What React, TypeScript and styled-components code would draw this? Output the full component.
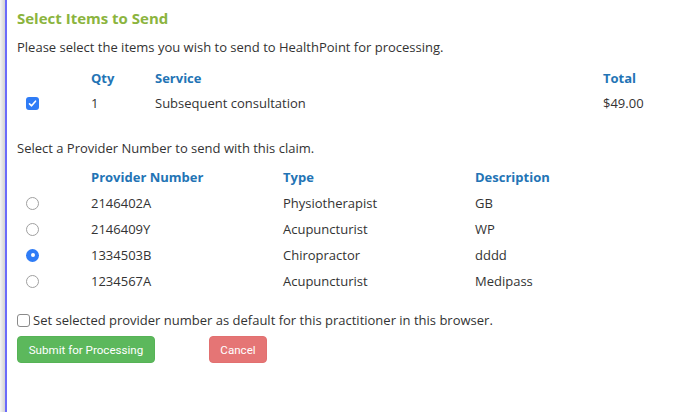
import React, { useState } from "react";
import styled, { createGlobalStyle } from "styled-components";

const Global = createGlobalStyle`
  html, body { margin: 0; padding: 0; background: #fff; }
  body { font-family: "Open Sans", "Noto Sans", sans-serif; color: #333; font-size: 13px; }
`;

const Frame = styled.div`
  display: flex;
  min-height: 412px;
`;

const Shadow = styled.div`
  width: 5px;
  background: linear-gradient(to right, #f4f4f4, #d2d2d2);
  flex-shrink: 0;
`;

const Border = styled.div`
  width: 2px;
  background: #6a6afa;
  flex-shrink: 0;
`;

const Content = styled.div`
  flex: 1;
  padding: 8px 0 0 10px;
  display: flex;
  flex-direction: column;
`;

const Heading = styled.h2`
  margin: 0;
  font-size: 15px;
  line-height: 20px;
  font-weight: 700;
  color: #8bb43e;
`;

const Para = styled.p<{ $mt: number }>`
  margin: ${(p) => p.$mt}px 0 0 0;
  font-size: 13px;
  line-height: 18px;
`;

const Grid = styled.div<{ $cols: string; $mt: number }>`
  display: grid;
  grid-template-columns: ${(p) => p.$cols};
  margin-top: ${(p) => p.$mt}px;
`;

const Cell = styled.div<{ $head?: boolean; $h: number }>`
  height: ${(p) => p.$h}px;
  display: flex;
  align-items: center;
  font-size: 13px;
  font-weight: ${(p) => (p.$head ? 700 : 400)};
  color: ${(p) => (p.$head ? "#2374b5" : "#333")};
  white-space: nowrap;
`;

const ControlCell = styled(Cell)`
  padding-left: 9px;
`;

const CheckBox = styled.span<{ $checked: boolean }>`
  width: 13px;
  height: 13px;
  box-sizing: border-box;
  border-radius: 3px;
  display: inline-flex;
  align-items: center;
  justify-content: center;
  background: ${(p) => (p.$checked ? "#2f7cf6" : "#fff")};
  border: ${(p) => (p.$checked ? "none" : "1px solid #8a8a8a")};
  flex-shrink: 0;
`;

const Radio = styled.span<{ $checked: boolean }>`
  width: 13px;
  height: 13px;
  box-sizing: border-box;
  border-radius: 50%;
  display: inline-flex;
  align-items: center;
  justify-content: center;
  background: ${(p) => (p.$checked ? "#2f7cf6" : "#fff")};
  border: ${(p) => (p.$checked ? "none" : "1px solid #a0a0a0")};
  cursor: pointer;
  &::after {
    content: "";
    width: 4px;
    height: 4px;
    border-radius: 50%;
    background: #fff;
    display: ${(p) => (p.$checked ? "block" : "none")};
  }
`;

const DefaultRow = styled.label`
  display: flex;
  align-items: center;
  gap: 3px;
  margin-top: 17px;
  height: 18px;
  font-size: 13px;
`;

const Buttons = styled.div`
  display: flex;
  gap: 54px;
  margin-top: 7px;
`;

const Button = styled.button<{ $variant: "ok" | "cancel" }>`
  height: 27px;
  box-sizing: border-box;
  border: 1px solid ${(p) => (p.$variant === "ok" ? "#56b356" : "#e27070")};
  border-radius: 4px;
  background: ${(p) => (p.$variant === "ok" ? "#5cb85c" : "#e57575")};
  color: #fff;
  font-family: Roboto, "Liberation Sans", sans-serif;
  font-size: 11.6px;
  width: ${(p) => (p.$variant === "ok" ? 138 : 58)}px;
  padding: 0;
  cursor: pointer;
`;

const Check = () => (
  <svg width="9" height="9" viewBox="0 0 9 9">
    <path d="M1.5 4.8 L3.6 6.8 L7.5 2.2" fill="none" stroke="#fff" strokeWidth="1.6" strokeLinecap="round" strokeLinejoin="round" />
  </svg>
);

const providers = [
  { num: "2146402A", type: "Physiotherapist", desc: "GB" },
  { num: "2146409Y", type: "Acupuncturist", desc: "WP" },
  { num: "1334503B", type: "Chiropractor", desc: "dddd" },
  { num: "1234567A", type: "Acupuncturist", desc: "Medipass" },
];

export default function App() {
  const [sel, setSel] = useState(2);
  return (
    <>
      <Global />
      <Frame>
        <Shadow />
        <Border />
        <Content>
          <Heading>Select Items to Send</Heading>
          <Para $mt={10}>Please select the items you wish to send to HealthPoint for processing.</Para>
          <Grid $cols="74px 64px 448px 1fr" $mt={9}>
            <Cell $h={26} />
            <Cell $h={26} $head>Qty</Cell>
            <Cell $h={26} $head>Service</Cell>
            <Cell $h={26} $head>Total</Cell>
            <ControlCell $h={24}>
              <CheckBox $checked>
                <Check />
              </CheckBox>
            </ControlCell>
            <Cell $h={24}>1</Cell>
            <Cell $h={24}>Subsequent consultation</Cell>
            <Cell $h={24}>$49.00</Cell>
          </Grid>
          <Para $mt={24}>Select a Provider Number to send with this claim.</Para>
          <Grid $cols="74px 192px 192px 1fr" $mt={7}>
            <Cell $h={26} />
            <Cell $h={26} $head>Provider Number</Cell>
            <Cell $h={26} $head>Type</Cell>
            <Cell $h={26} $head>Description</Cell>
            {providers.map((p, i) => (
              <React.Fragment key={p.num}>
                <ControlCell $h={26}>
                  <Radio $checked={sel === i} onClick={() => setSel(i)} />
                </ControlCell>
                <Cell $h={26}>{p.num}</Cell>
                <Cell $h={26}>{p.type}</Cell>
                <Cell $h={26}>{p.desc}</Cell>
              </React.Fragment>
            ))}
          </Grid>
          <DefaultRow>
            <CheckBox $checked={false} />
            Set selected provider number as default for this practitioner in this browser.
          </DefaultRow>
          <Buttons>
            <Button $variant="ok">Submit for Processing</Button>
            <Button $variant="cancel">Cancel</Button>
          </Buttons>
        </Content>
      </Frame>
    </>
  );
}
